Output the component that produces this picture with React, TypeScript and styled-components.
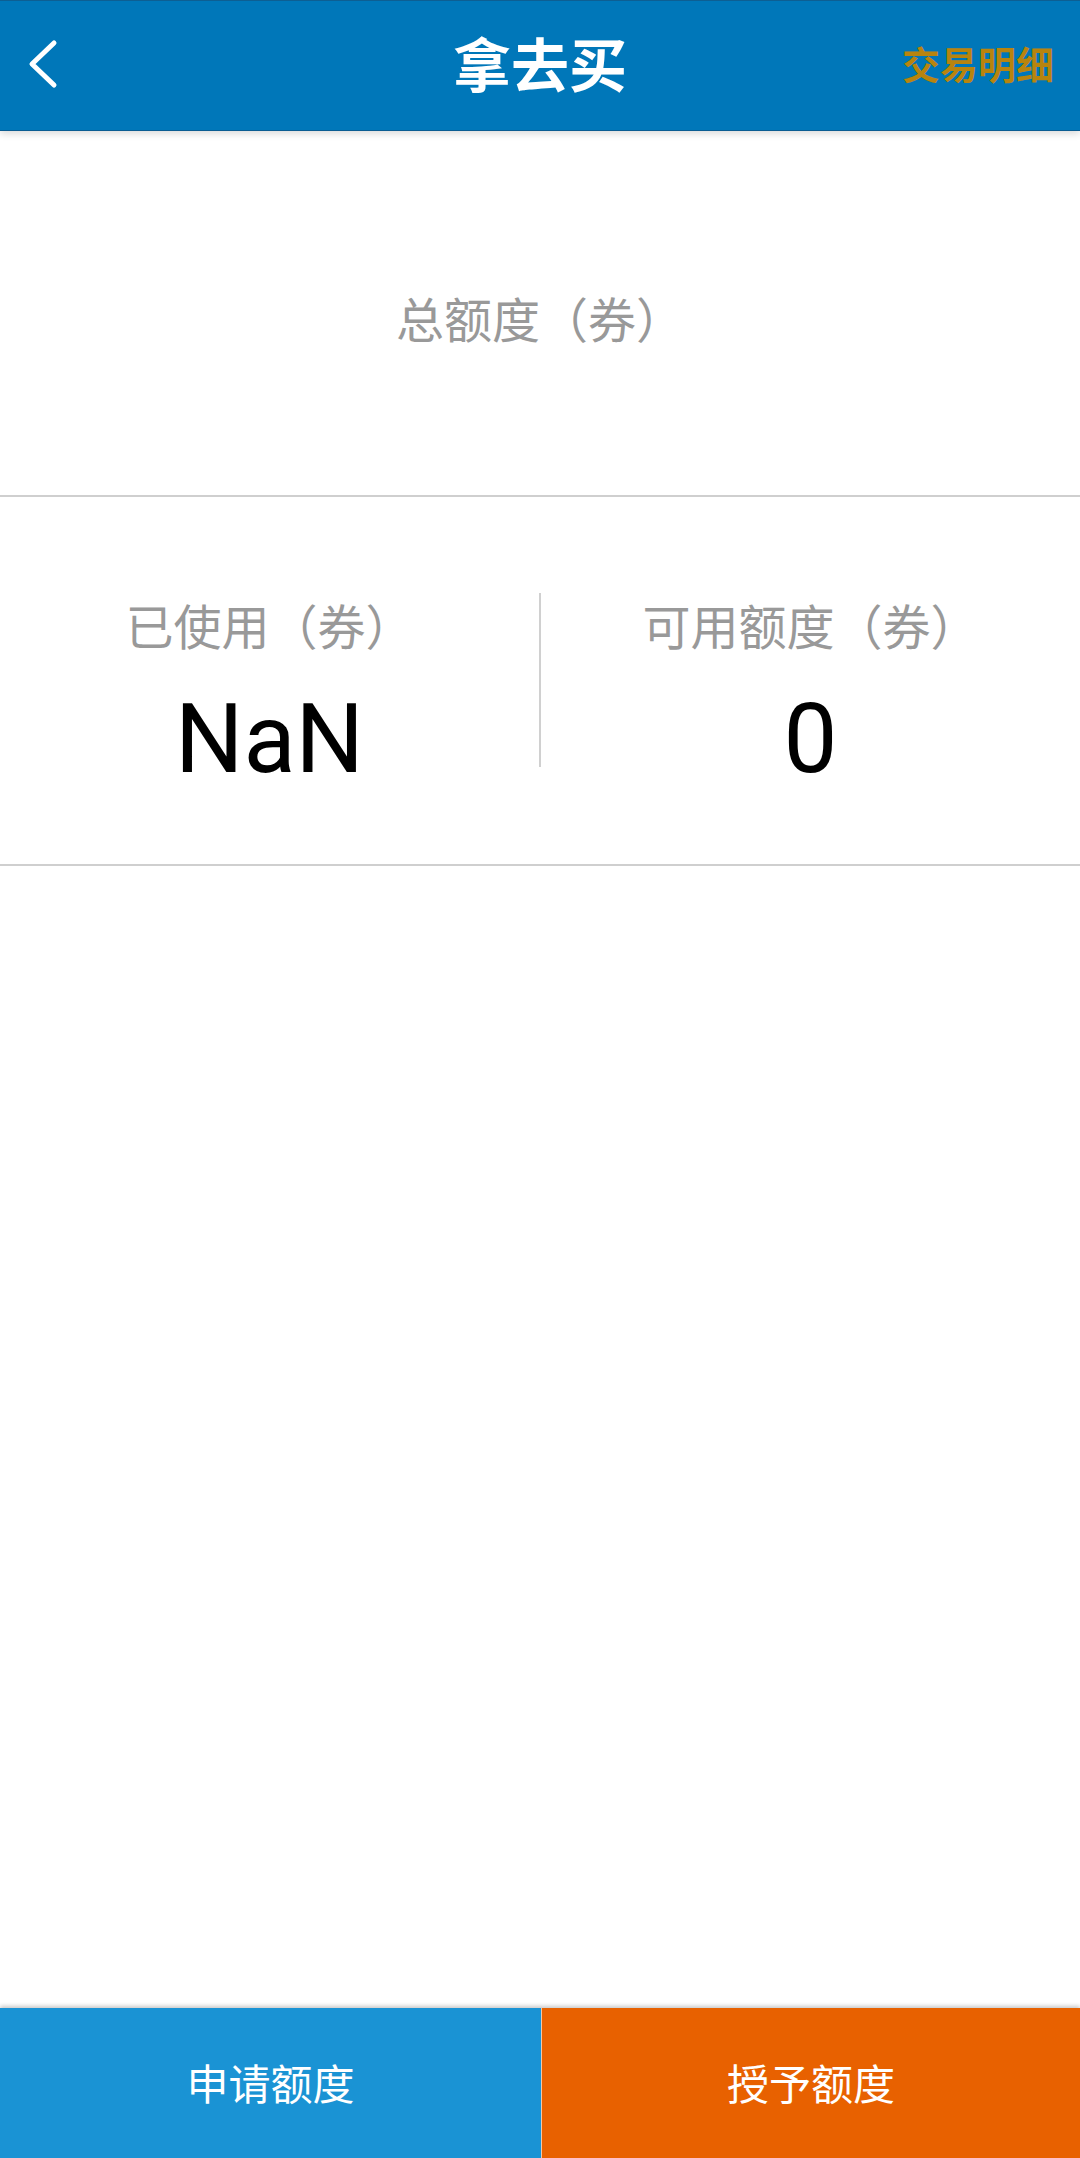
import React from 'react';
import styled, { createGlobalStyle } from 'styled-components';

const GlobalStyle = createGlobalStyle`
  html, body {
    margin: 0;
    padding: 0;
    background: #fff;
  }
  body {
    font-family: Roboto, "Noto Sans CJK SC", sans-serif;
  }
`;

const Page = styled.div`
  display: flex;
  flex-direction: column;
  min-height: 100vh;
  background: #fff;
`;

const Header = styled.header`
  display: grid;
  grid-template-columns: 1fr auto 1fr;
  align-items: center;
  height: 129px;
  background: #0077b9;
  border-top: 1px solid #0d5f93;
  border-bottom: 1px solid #0a5c92;
  box-shadow: 0 3px 7px rgba(0, 0, 0, 0.14);
  position: relative;
  z-index: 1;
`;

const BackButton = styled.button`
  justify-self: start;
  display: flex;
  align-items: center;
  margin: 0 0 4px 26px;
  padding: 0;
  border: none;
  background: none;
  cursor: pointer;
`;

const Title = styled.h1`
  margin: 0 0 8px;
  font-family: "Noto Sans CJK SC", sans-serif;
  font-size: 58px;
  font-weight: 700;
  color: #fff;
  line-height: 1;
`;

const DetailLink = styled.a`
  justify-self: end;
  margin: 0 26px 6px 0;
  font-family: "Noto Sans CJK SC", sans-serif;
  font-size: 38px;
  font-weight: 700;
  color: #b8840e;
  text-decoration: none;
  line-height: 1;
`;

const TotalSection = styled.section`
  display: flex;
  align-items: center;
  justify-content: center;
  height: 366px;
  padding-top: 8px;
  box-sizing: border-box;
  border-bottom: 2px solid #cfcfcf;
`;

const Label = styled.div`
  font-family: "Noto Sans CJK SC", sans-serif;
  font-size: 48px;
  line-height: 60px;
  color: #999;
`;

const StatsSection = styled.section`
  display: grid;
  grid-template-columns: 1fr 2px 1fr;
  align-items: start;
  height: 369px;
  padding-top: 96px;
  box-sizing: border-box;
  border-bottom: 2px solid #cfcfcf;
`;

const StatColumn = styled.div`
  display: flex;
  flex-direction: column;
  align-items: center;
  padding-top: 1px;
`;

const StatValue = styled.div`
  margin-top: 37px;
  font-family: Roboto, sans-serif;
  font-size: 96px;
  line-height: 96px;
  color: #000;
`;

const VDivider = styled.div`
  width: 2px;
  height: 174px;
  background: #d0d0d0;
`;

const Spacer = styled.div`
  flex: 1;
`;

const BottomBar = styled.footer`
  display: grid;
  grid-template-columns: 541px 1fr;
  height: 150px;
  box-shadow: 0 -2px 4px rgba(0, 0, 0, 0.22);
`;

const ActionButton = styled.button<{ $bg: string; $split?: boolean }>`
  display: flex;
  align-items: center;
  justify-content: center;
  padding: 0 0 4px;
  border: none;
  border-left: ${(p) => (p.$split ? '1px solid #f4c7a4' : 'none')};
  background: ${(p) => p.$bg};
  color: #fff;
  font-family: "Noto Sans CJK SC", sans-serif;
  font-size: 42px;
  cursor: pointer;
`;

const ChevronLeft = () => (
  <svg width="34" height="50" viewBox="0 0 34 50">
    <polyline
      points="28,4 6,25 28,46"
      fill="none"
      stroke="#fff"
      strokeWidth="5"
      strokeLinecap="round"
      strokeLinejoin="round"
    />
  </svg>
);

export default function App() {
  const used = Number(undefined);
  const available = 0;

  return (
    <Page>
      <GlobalStyle />
      <Header>
        <BackButton aria-label="back">
          <ChevronLeft />
        </BackButton>
        <Title>拿去买</Title>
        <DetailLink href="#">交易明细</DetailLink>
      </Header>

      <TotalSection>
        <Label>总额度（券）</Label>
      </TotalSection>

      <StatsSection>
        <StatColumn>
          <Label>已使用（券）</Label>
          <StatValue>{String(used)}</StatValue>
        </StatColumn>
        <VDivider />
        <StatColumn>
          <Label>可用额度（券）</Label>
          <StatValue>{available}</StatValue>
        </StatColumn>
      </StatsSection>

      <Spacer />

      <BottomBar>
        <ActionButton $bg="#1a93d4">申请额度</ActionButton>
        <ActionButton $bg="#e86100" $split>
          授予额度
        </ActionButton>
      </BottomBar>
    </Page>
  );
}
